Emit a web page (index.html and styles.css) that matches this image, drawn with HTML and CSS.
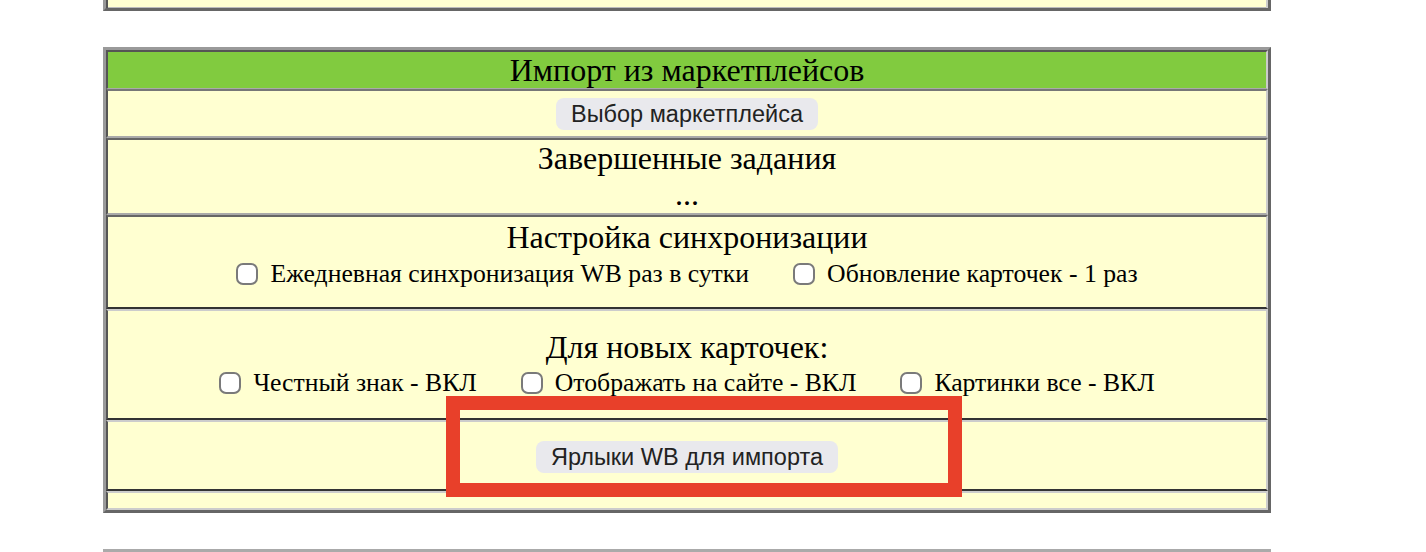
FILE: index.html
```html
<!DOCTYPE html>
<html lang="ru">
<head>
<meta charset="utf-8">
<title>Импорт из маркетплейсов</title>
<link rel="stylesheet" href="styles.css">
</head>
<body>
<div class="page">
  <div class="prev"></div>

  <div class="tbl">
    <div class="row head">Импорт из маркетплейсов</div>
    <div class="row r2 sep-light-bottom">
      <button class="btn" type="button">Выбор маркетплейса</button>
    </div>
    <div class="row r3 sep-dark-top sep-light-bottom">
      <div class="title">Завершенные задания</div>
      <div class="title">...</div>
    </div>
    <div class="row r4 sep-dark-top sep-black-bottom">
      <div class="title">Настройка синхронизации</div>
      <div class="checks checks-tall">
        <label class="chk"><input type="checkbox"><span>Ежедневная синхронизация WB раз в сутки</span></label>
        <label class="chk"><input type="checkbox"><span>Обновление карточек - 1 раз</span></label>
      </div>
    </div>
    <div class="row r5 sep-pale-top sep-black-bottom">
      <div class="title">Для новых карточек:</div>
      <div class="checks">
        <label class="chk"><input type="checkbox"><span>Честный знак - ВКЛ</span></label>
        <label class="chk"><input type="checkbox"><span>Отображать на сайте - ВКЛ</span></label>
        <label class="chk"><input type="checkbox"><span>Картинки все - ВКЛ</span></label>
      </div>
    </div>
    <div class="row r6 sep-pale-top sep-black-bottom">
      <button class="btn" type="button">Ярлыки WB для импорта</button>
    </div>
    <div class="row r7 sep-pale-top sep-pale-bottom"></div>
  </div>

  <div class="next"></div>

  <div class="highlight"></div>
</div>
</body>
</html>
```

FILE: styles.css
```css
html, body {
  margin: 0;
  padding: 0;
  background: #ffffff;
}

.page {
  position: relative;
  padding-left: 103px;
  width: 1168px;
  display: flex;
  flex-direction: column;
  font-family: "Liberation Serif", "Times New Roman", serif;
  color: #000;
}

.prev {
  box-sizing: border-box;
  width: 1168px;
  height: 11px;
  background: #ffffd1;
  border-left: 3px solid #999;
  border-right: 3px solid #666;
  border-bottom: 3px solid #666;
  box-shadow: inset 2px 0 0 #555, inset -2px 0 0 #ccc, inset 0 -1px 0 #bbb;
}

.tbl {
  box-sizing: border-box;
  width: 1168px;
  margin-top: 36px;
  border-top: 3px solid #9a9a9a;
  border-left: 3px solid #9a9a9a;
  border-right: 3px solid #666;
  border-bottom: 3px solid #666;
  display: flex;
  flex-direction: column;
}

.row {
  background: #ffffd1;
  border-left: 2px solid #555;
  border-right: 2px solid #ccc;
  display: flex;
  flex-direction: column;
  align-items: center;
  text-align: center;
}

.head {
  background: #81cb3f;
  border-top: 2px solid #555;
  border-bottom: 1px solid #aaa;
  height: 36px;
  line-height: 36px;
  font-size: 32px;
  justify-content: center;
}

.title {
  font-size: 32px;
  line-height: 36px;
  height: 36px;
}

.sep-light-bottom { border-bottom: 2px solid #aaa; }
.sep-dark-top { border-top: 2px solid #666; }
.sep-black-bottom { border-bottom: 2px solid #333; }
.sep-pale-top { border-top: 2px solid #ccc; }
.sep-pale-bottom { border-bottom: 2px solid #ccc; }

.r2 {
  border-top: 2px solid #777;
  padding: 7px 0 6px;
}

.r3 {
  height: 73px;
}

.r4 {
  padding: 2px 0 14px;
}

.r5 {
  padding: 18px 0 17px;
}

.r6 {
  padding: 19px 0 16px;
}

.r7 {
  height: 15px;
}

.checks {
  display: flex;
  align-items: center;
  justify-content: center;
  gap: 44px;
  height: 36px;
  font-size: 25.7px;
}

.checks-tall {
  height: 38px;
}

.chk {
  display: flex;
  align-items: center;
  gap: 12px;
  white-space: nowrap;
}

.chk input {
  appearance: none;
  -webkit-appearance: none;
  margin: 0;
  width: 22px;
  height: 22px;
  flex: 0 0 22px;
  box-sizing: border-box;
  border: 2px solid #7a7a7a;
  border-radius: 7px;
  background: #fff;
}

.btn {
  appearance: none;
  -webkit-appearance: none;
  border: none;
  height: 32px;
  padding: 0 15px;
  border-radius: 8px;
  background: #e9e9ed;
  color: #222;
  font-family: "Liberation Sans", Arial, sans-serif;
  font-size: 23.5px;
  line-height: 32px;
}

.next {
  box-sizing: border-box;
  width: 1168px;
  height: 3px;
  margin-top: 36px;
  background: #aaa;
}

.highlight {
  position: absolute;
  left: 446px;
  top: 396px;
  width: 516px;
  height: 101px;
  box-sizing: border-box;
  border: 14px solid #e8402a;
}
```
